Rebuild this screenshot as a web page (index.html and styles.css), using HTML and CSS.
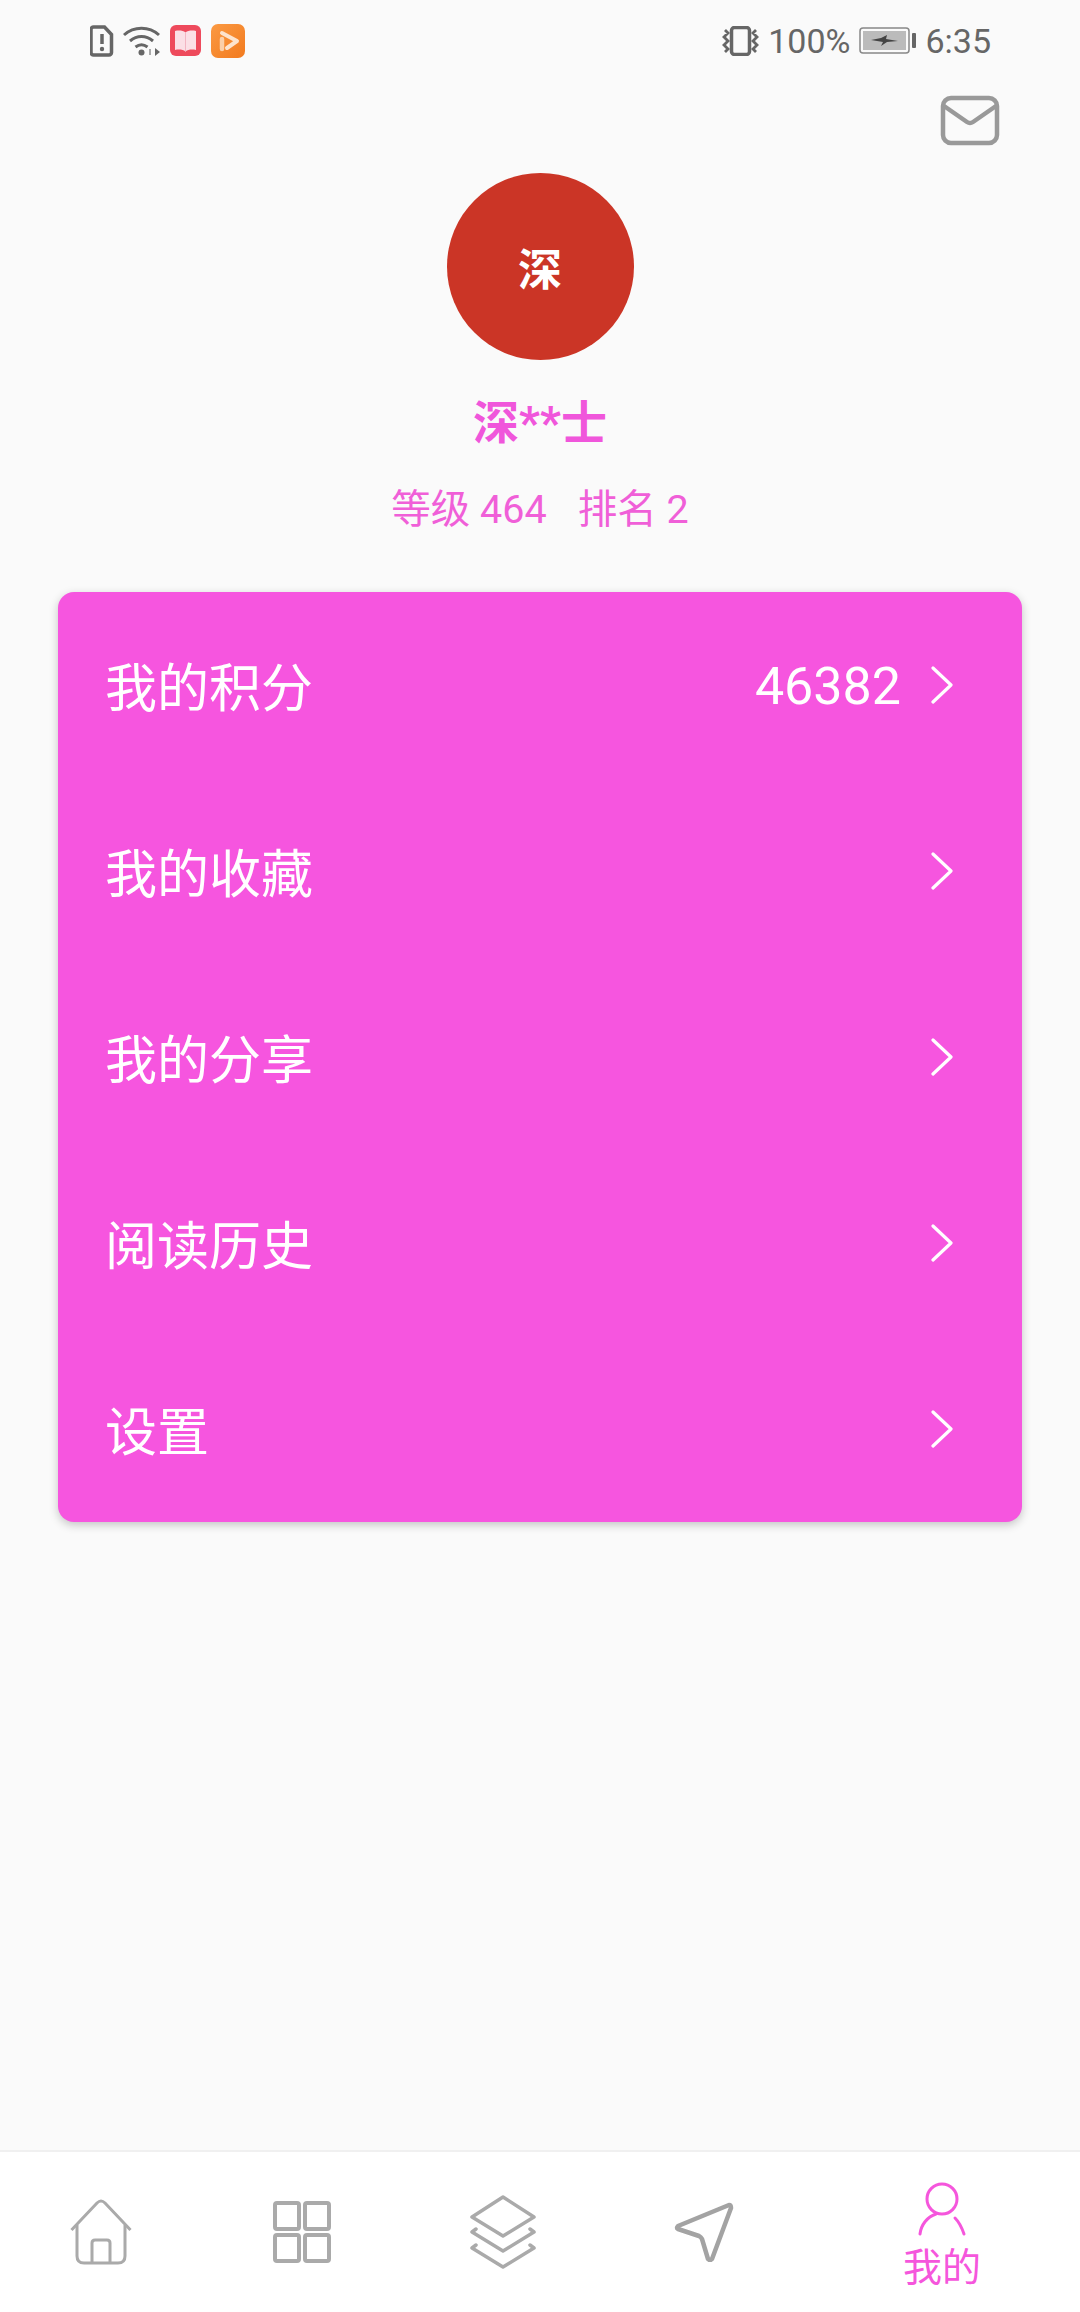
FILE: index.html
```html
<!DOCTYPE html>
<html lang="zh-CN">
<head>
    <meta charset="UTF-8">
    <meta name="viewport" content="width=device-width, initial-scale=1.0">
    <title>我的</title>
    <link rel="stylesheet" href="styles.css">
</head>
<body>
<div class="page">

    <!-- Status bar -->
    <div class="status-bar">
        <div class="status-left">
            <svg width="24" height="32" viewBox="0 0 24 32"><path d="M3.500 2h11l7 7.500v18a2.500 2.500 0 0 1-2.500 2.500h-15.500a2.500 2.500 0 0 1-2.500-2.500v-23a2.500 2.500 0 0 1 2.500-2.500z" fill="none" stroke="#666" stroke-width="3.500"/><path d="M12 9v10" stroke="#666" stroke-width="3.500"/><circle cx="12" cy="24" r="2.200" fill="#666"/></svg>
            <svg class="wifi" width="38" height="30" viewBox="0 0 38 30"><path d="M1 9c10-9 25-9 35 0M7 15c7-6 16-6 23 0M12.500 21c4-3 8-3 12 0" fill="none" stroke="#666" stroke-width="3"/><circle cx="18.500" cy="26.500" r="3" fill="#666"/><path d="M32 22v8l5-4z" fill="#666"/><path d="M27 23v6" stroke="#aaa" stroke-width="2"/></svg>
            <svg class="app-book" width="31" height="31" viewBox="0 0 31 31"><rect width="31" height="31" rx="6" fill="#ee4a5c"/><path d="M5 6c4-1 8-.500 10.500 1.500c2.500-2 6.500-2.500 10.500-1.500v19c-4-1-8-.500-10.500 1.500c-2.500-2-6.500-2.500-10.500-1.500z" fill="#fbdfe6"/><path d="M15.500 7.500v19" stroke="#f3b5c3" stroke-width="1"/></svg>
            <svg class="app-video" width="34" height="34" viewBox="0 0 34 34"><defs><linearGradient id="vid" x1="0" y1="0" x2="1" y2="1"><stop offset="0" stop-color="#fb9a43"/><stop offset="1" stop-color="#f27a1e"/></linearGradient></defs><rect width="34" height="34" rx="7" fill="url(#vid)"/><path d="M11 9l15 8l-10 7" fill="none" stroke="#fde3cd" stroke-width="4" stroke-linecap="round" stroke-linejoin="round"/><path d="M11 15v10" stroke="#fbcfa8" stroke-width="4.500" stroke-linecap="round"/></svg>
        </div>
        <div class="status-right">
            <svg width="39" height="30" viewBox="0 0 39 30"><rect x="10.500" y="1.500" width="18" height="27" rx="3" fill="none" stroke="#666" stroke-width="3.500"/><path d="M4 4l3 3-4 4 4 4-4 4 4 4-3 3M35 4l-3 3 4 4-4 4 4 4-4 4 3 3" fill="none" stroke="#666" stroke-width="2.800"/></svg>
            <span class="battery-text">100%</span>
            <svg class="battery" width="58" height="27" viewBox="0 0 58 27"><rect x="1" y="1" width="49" height="25" rx="3" fill="#fafafa" stroke="#888" stroke-width="1.500"/><rect x="4" y="4" width="43" height="19" fill="#bbb"/><path d="M12 13l10-2 6-3-1 4 12 2-11 1-6 4 2-4z" fill="#444"/><rect x="53" y="6" width="4" height="15" rx="1" fill="#666"/></svg>
            <span class="time">6:35</span>
        </div>
    </div>

    <!-- Mail -->
    <div class="top-row">
        <svg width="60" height="51" viewBox="0 0 60 51"><rect x="3" y="3" width="54" height="45" rx="8" fill="none" stroke="#999" stroke-width="4.500"/><path d="M4 11l23 16q3 2 6 0l23-16" fill="none" stroke="#999" stroke-width="4.500"/></svg>
    </div>

    <!-- Profile -->
    <div class="profile">
        <div class="avatar">深</div>
        <div class="name">深**士</div>
        <div class="meta"><span>等级 464</span><span>排名 2</span></div>
    </div>

    <!-- Menu card -->
    <div class="card">
        <div class="row"><span>我的积分</span><span class="value">46382</span><svg class="chev" width="24" height="38" viewBox="0 0 24 38"><path d="M3 2l18 17-18 17" fill="none" stroke="#fff" stroke-width="3.200" stroke-linecap="round" stroke-linejoin="round"/></svg></div>
        <div class="row"><span>我的收藏</span><svg class="chev" width="24" height="38" viewBox="0 0 24 38"><path d="M3 2l18 17-18 17" fill="none" stroke="#fff" stroke-width="3.200" stroke-linecap="round" stroke-linejoin="round"/></svg></div>
        <div class="row"><span>我的分享</span><svg class="chev" width="24" height="38" viewBox="0 0 24 38"><path d="M3 2l18 17-18 17" fill="none" stroke="#fff" stroke-width="3.200" stroke-linecap="round" stroke-linejoin="round"/></svg></div>
        <div class="row"><span>阅读历史</span><svg class="chev" width="24" height="38" viewBox="0 0 24 38"><path d="M3 2l18 17-18 17" fill="none" stroke="#fff" stroke-width="3.200" stroke-linecap="round" stroke-linejoin="round"/></svg></div>
        <div class="row"><span>设置</span><svg class="chev" width="24" height="38" viewBox="0 0 24 38"><path d="M3 2l18 17-18 17" fill="none" stroke="#fff" stroke-width="3.200" stroke-linecap="round" stroke-linejoin="round"/></svg></div>
    </div>

    <!-- Bottom nav -->
    <div class="tabbar">
        <div class="tab">
            <svg width="62" height="66" viewBox="0 0 62 66"><path d="M1.500 31L27 4q4-4 8 0l25.500 27" fill="none" stroke="#aaa" stroke-width="3"/><path d="M7 26v31q0 7 7 7h34q7 0 7-7V26" fill="none" stroke="#aaa" stroke-width="3"/><path d="M22 64V44q0-3 3-3h12q3 0 3 3v20" fill="none" stroke="#aaa" stroke-width="3"/></svg>
        </div>
        <div class="tab">
            <svg width="58" height="62" viewBox="0 0 58 62"><g fill="none" stroke="#aaa" stroke-width="4"><rect x="2" y="2" width="24" height="26" rx="2"/><rect x="32" y="2" width="24" height="26" rx="2"/><rect x="2" y="34" width="24" height="26" rx="2"/><rect x="32" y="34" width="24" height="26" rx="2"/></g></svg>
        </div>
        <div class="tab">
            <svg width="66" height="74" viewBox="0 0 66 74"><g fill="none" stroke="#aaa" stroke-width="3.500" stroke-linejoin="round" stroke-linecap="round"><path d="M33 2l31 20-31 19-31-19z"/><path d="M6 34l-4 3 31 19 31-19-4-3"/><path d="M6 50l-4 3 31 19 31-19-4-3"/></g></svg>
        </div>
        <div class="tab">
            <svg width="60" height="60" viewBox="0 0 60 60"><path d="M55 3L4 24q-2 2 0 3l21 7q2 1 3 3l6 20q2 2 4 0L57 6q0-3-2-3z" fill="none" stroke="#a3a3a3" stroke-width="4.500" stroke-linejoin="round"/></svg>
        </div>
        <div class="tab tab-active">
            <svg width="48" height="54" viewBox="0 0 48 54"><circle cx="24" cy="17" r="15" fill="none" stroke="#f556dc" stroke-width="3"/><path d="M2 52c1-9 7-17 16-20M37 36c4 4 7 10 9 16" fill="none" stroke="#f556dc" stroke-width="3" stroke-linecap="round"/></svg>
            <span class="tab-label">我的</span>
        </div>
    </div>

</div>
</body>
</html>
```

FILE: styles.css
```css
* {
    box-sizing: border-box;
}
body {
    margin: 0;
    background: #fafafa;
    font-family: Roboto, "Noto Sans CJK SC", sans-serif;
}
svg {
    display: block;
    flex: none;
}
.page {
    width: 1080px;
    height: 2312px;
    display: flex;
    flex-direction: column;
}
.status-bar {
    height: 58px;
    padding: 23px 89px 0 90px;
    display: flex;
    justify-content: space-between;
    align-items: center;
    color: #666;
    font-size: 34px;
}
.status-left,
.status-right {
    display: flex;
    align-items: center;
}
.wifi {
    margin-left: 9px;
}
.app-book {
    margin-left: 9px;
}
.app-video {
    margin-left: 10px;
}
.battery-text {
    margin-left: 8px;
}
.battery {
    margin-left: 9px;
}
.time {
    margin-left: 8px;
}
.top-row {
    height: 115px;
    padding: 37px 80px 0 0;
    display: flex;
    justify-content: flex-end;
    align-items: flex-start;
}
.profile {
    display: flex;
    flex-direction: column;
    align-items: center;
}
.avatar {
    width: 187px;
    height: 187px;
    border-radius: 50%;
    background: #cb3526;
    color: #fff;
    font-size: 44px;
    font-weight: bold;
    display: flex;
    align-items: center;
    justify-content: center;
}
.name {
    margin-top: 34px;
    height: 58px;
    line-height: 58px;
    font-size: 46px;
    font-weight: bold;
    color: #f056db;
}
.meta {
    margin-top: 34px;
    height: 48px;
    line-height: 48px;
    font-size: 39.5px;
    color: #f05fd8;
    display: flex;
    gap: 31px;
}
.card {
    margin: 58px 58px 0;
    height: 930px;
    background: #f655df;
    border-radius: 16px;
    box-shadow: 0 3px 10px rgba(0, 0, 0, 0.22);
    color: #fff;
    font-size: 52px;
    display: flex;
    flex-direction: column;
}
.row {
    flex: 1;
    padding: 0 68px 2px 47px;
    display: flex;
    align-items: center;
}
.value {
    margin-left: auto;
    padding-top: 4px;
}
.chev {
    margin-left: auto;
    margin-top: 2px;
}
.value + .chev {
    margin-left: 29px;
}
.tabbar {
    margin-top: auto;
    height: 162px;
    background: #fff;
    border-top: 2px solid #f0f0f0;
    display: grid;
    grid-template-columns: 201px 201px 201px 201px 276px;
}
.tab {
    display: flex;
    flex-direction: column;
    align-items: center;
    justify-content: center;
}
.tab-active {
    justify-content: flex-start;
    padding-top: 30px;
    color: #f556dc;
    font-size: 39px;
    line-height: 46px;
}
.tab-label {
    margin-top: 9px;
}
```
